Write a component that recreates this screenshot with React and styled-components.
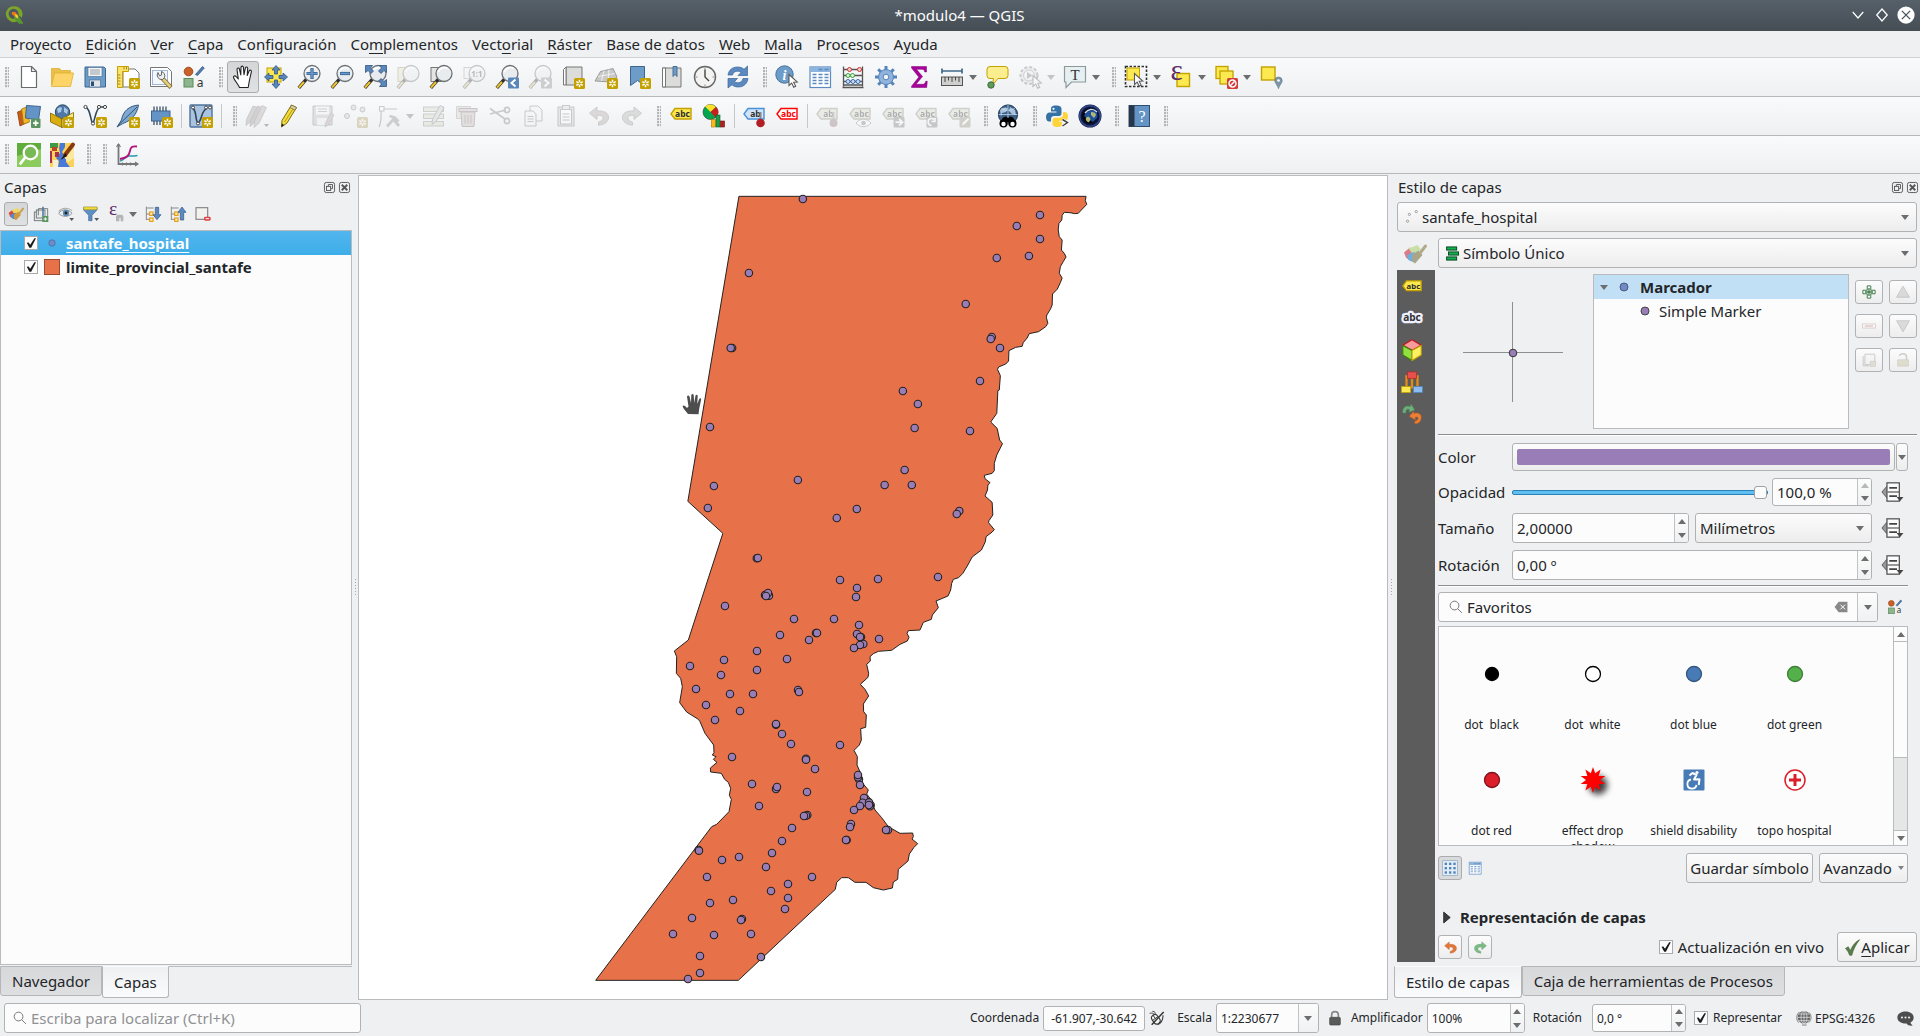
import React from "react";
import styled, { createGlobalStyle, css } from "styled-components";

const Global = createGlobalStyle`
  *, *::before, *::after { box-sizing: border-box; }
  html, body { margin: 0; padding: 0; }
  body, button, input, select {
    font-family: "Noto Sans", "Open Sans", sans-serif;
    font-size: 15px;
    color: #232629;
  }
  body { background: #eff0f1; overflow: hidden; }
  button, input, select { margin: 0; padding: 0; }
  svg { display: block; flex: none; overflow: visible; }
`;

/* ---------- drawings ---------- */

const NewBadge = () => (
  <g>
    <rect x="13" y="13" width="11" height="11" rx="1.5" fill="#c4a000" />
    <path d="M18.5 14.8v7.4M15.3 16.7l6.4 3.7M21.7 16.7l-6.4 3.7" stroke="#fff" strokeWidth="1.5" />
    <circle cx="18.5" cy="18.5" r="1.2" fill="#c4a000" />
  </g>
);

const Lens = ({ glass = "#e9ecee" }) => (
  <g>
    <path d="M9.500 14 1.800 22.800" stroke="#2e2e2e" strokeWidth="3.400" />
    <path d="M7 17 2 22.500" stroke="#f0c52e" strokeWidth="2" />
    <circle cx="15" cy="8.500" r="8" fill={glass} stroke="#6c7175" strokeWidth="1.300" />
    <path d="M9.500 7a6 6 0 0 1 9-3.500" stroke="#fff" strokeWidth="1.500" fill="none" />
  </g>
);

const Tag = ({ fill = "#fce94f", line = "#c4a000", text = "#2e2e2e", label = "abc", y = 0 }) => (
  <g transform={`translate(0 ${y})`}>
    <path d="M2 12 6 6.5h16v10.5H6z" fill={fill} stroke={line} strokeWidth="1.4" />
    <text x="13.5" y="15" fontSize="8.5" fontWeight="700" textAnchor="middle" fill={text} fontFamily="Noto Sans, sans-serif">{label}</text>
  </g>
);

const Pointer = ({ x = 0, y = 0 }) => (
  <path transform={`translate(${x} ${y})`} d="M0 0v11l2.7-2.4 2 4.2 2-1-2-4 3.6-.3z" fill="#fff" stroke="#5a5a5a" strokeWidth="1.1" />
);

const Swatches = () => (
  <g>
    <circle cx="6.500" cy="6.500" r="4.300" fill="#c8602a" stroke="#a34a1c" />
    <path d="M13.500 9.500 20.500 1.500l1.800 1.500L15.500 10.500z" fill="#4f7fb5" stroke="#36597f" strokeWidth=".8" />
    <rect x="2" y="13.500" width="9" height="8.500" fill="#8db58d" stroke="#5b8a5b" />
    <text x="18" y="21.500" fontSize="12" textAnchor="middle" fill="#333" fontFamily="Noto Sans, sans-serif">a</text>
  </g>
);

const Globe = () => (
  <g>
    <circle cx="12" cy="10.500" r="9.600" fill="#3d6187" stroke="#20364f" />
    <path d="M4 6c3-3 6-3 8-2l-2 4-4 1-1 4zM14 3l5 3 1 5-4-1-3-3zM8 13l5 1-1 5-4-2z" fill="#a8c4df" />
    <path d="M2.500 10.500h19M12 1v19M5 4c4 3 10 3 14 0" stroke="#cfdfee" strokeWidth=".7" fill="none" />
  </g>
);

const Epsilon = ({ y }) => (
  <text x="7.500" y={y} fontSize="29" textAnchor="middle" fill="#5c2d66" fontFamily="Liberation Serif, serif">ε</text>
);

const PaintBrush = ({ top, left, low, head, handle }) => (
  <g>
    <path d="M1 10.500 7 5.500l7 8.500-6 5.500-5-4z" fill={left} />
    <path d="M5.500 6.500 14.500 3l3.500 4.500-8 5z" fill={top} />
    <path d="m4 13 7-3 4 4-5 6-5-2.500z" fill={low} />
    <path d="m9.500 12.500 6-4 4 4.500-7.500 8.500c-2-1-4-5-2.500-9z" fill={head} />
    <path d="M17.500 10.500 22.500 4" stroke={handle} strokeWidth="3" strokeLinecap="round" />
  </g>
);

const LayerTreeLines = () => (
  <g>
    <path d="M2 1v20M2 3h11M2 12h5M2 20h5" stroke="#888" strokeWidth="1.500" />
    <rect x="7" y="9" width="5" height="5" fill="#fff2b0" stroke="#e59400" strokeWidth="1.600" />
    <rect x="7" y="18" width="5" height="5" fill="#fff2b0" stroke="#e59400" strokeWidth="1.600" />
  </g>
);

const undoPath = "M10 3 2.500 9.200 10 15.400v-4c4.500-.6 6.500.8 6 3.200-.4 1.700-2 2.800-4.500 3.600v3c6-.6 10-3.600 10-7.700 0-4.800-4.500-6.900-11.500-6.500z";

const ICONS = {
  logo: (
    <g>
      <path d="M11.500 1.500a9.500 9.500 0 1 0 5 17.700L14 16a6 6 0 1 1 3.300-4l4 3.200A9.700 9.700 0 0 0 11.500 1.500z" fill="#7da526" />
      <path d="m12 12 5.500.8L23 21.500v1h-5l-6-6.500z" fill="#589632" />
      <path d="M9.500 8.500h4l2.500 3v4l-2.500-1.300-4-3.200z" fill="#ee7913" />
      <path d="m13 11 3.500 1.200.5 4-3-1.800z" fill="#f6d23c" />
    </g>
  ),
  file: <path d="M4.500 1.500h10l5 5v16h-15zM14.500 1.500v5h5" fill="#fff" stroke="#6b6b6b" strokeWidth="1.200" strokeLinejoin="round" />,
  open: (
    <g stroke="#e0b030" strokeWidth=".8">
      <path d="M1.500 3.500h8l2 2h9v14h-19z" fill="#eac04a" />
      <path d="M4.500 8h19l-3 13.500H1.500z" fill="#fcd468" />
    </g>
  ),
  save: (
    <g>
      <path d="M2 2h19l1.500 1.500V22H2z" fill="#6d9cc9" stroke="#3c668f" />
      <rect x="5" y="2.500" width="14" height="9" fill="#f4f6f8" stroke="#3c668f" strokeWidth=".6" />
      <path d="M7 5h10M7 7h10M7 9h10" stroke="#8a9299" strokeWidth=".9" />
      <rect x="6.500" y="15" width="11" height="7" fill="#dfe4e8" stroke="#3c668f" strokeWidth=".6" />
      <rect x="8" y="16.500" width="3" height="4.500" fill="#2d4f73" />
    </g>
  ),
  layout: (
    <g>
      <path d="M7 4h12l4 4v14H7z" fill="#fff" stroke="#777" />
      <path d="M1.500 1.500h11v5h-6v16h-5z" fill="#fbe26b" stroke="#c4a000" />
      <path d="M2 10h2.500M2 13h2.500M2 16h2.500M2 19h2.500M8 2v2.500M10.500 2v2.500" stroke="#8f7500" strokeWidth=".8" />
      <NewBadge />
    </g>
  ),
  layouts: (
    <g>
      <path d="M1.500 2.500h17l4 4v15h-21z" fill="#fff" stroke="#777" />
      <rect x="3.500" y="5.500" width="15" height="14" fill="#f4f7fc" stroke="#9db8dc" />
      <path d="m13.500 13.500 8.500 9" stroke="#7a6a3a" strokeWidth="4.200" />
      <path d="m14 14 7.500 8" stroke="#e6cf7a" strokeWidth="2.600" />
      <path d="M9 7.500a4.500 4.500 0 0 0 4.500 7l2-2a4.500 4.500 0 0 0-3-6v3.500l-2 .8z" fill="#eceff1" stroke="#555" strokeWidth=".9" />
    </g>
  ),
  style: <Swatches />,
  hand: (
    <path d="M8.500 22.500C7 19 3.500 15.500 2.500 12.500c-.3-1.600 1.700-2.300 2.700-.9L7.300 14 6 4.500c-.1-1.700 2-2.100 2.400-.5L9.800 10 10 2.300c.1-1.600 2.200-1.600 2.400 0l.6 7.400 1.400-6.800c.5-1.500 2.400-1.100 2.300.5L16.200 10.500l2-4.800c.8-1.200 2.500-.5 2.200 1l-2 8.800-1.200 7z" fill="#fff" stroke="#222" strokeWidth="1.100" strokeLinejoin="round" />
  ),
  panSel: (
    <g>
      <rect x="3" y="3" width="14" height="14" fill="#fce94f" stroke="#c4a000" />
      <path d="m12 .5 4 4.500h-2.500v4h-3V5H8zM12 23.500l4-4.500h-2.500v-4h-3v4H8zM.5 12l4.500-4v2.500h4v3H5V16zM23.500 12 19 8v2.500h-4v3h4V16z" fill="#5a86ba" stroke="#2f5584" strokeWidth=".8" />
    </g>
  ),
  zoomIn: <g><Lens /><path d="M15 3v11M9.500 8.500h11" stroke="#36618f" strokeWidth="3.200" /><path d="M15 3.500v10M10 8.500h10" stroke="#6c99cb" strokeWidth="1.600" /></g>,
  zoomOut: <g><Lens /><path d="M10 8.500h10" stroke="#36618f" strokeWidth="3.200" /><path d="M10.500 8.500h9" stroke="#6c99cb" strokeWidth="1.600" /></g>,
  zoomFull: (
    <g>
      <Lens />
      <path d="M2.500.5h7l-2 2.500 3 3-2.500 2.500-3-3-2.500 2zM23.500.5h-7l2 2.500-3 3 2.500 2.500 3-3 2.500 2zM23.500 21.500h-7l2-2.500-3-3 2.500-2.500 3 3 2.500-2z" fill="#5a86ba" stroke="#2f5584" strokeWidth=".8" />
    </g>
  ),
  zoomSel: <g><rect x="2" y="2.500" width="12" height="14" fill="#f1e58c" stroke="#a99945" /><Lens /></g>,
  zoomLayer: <g><rect x="2" y="2.500" width="12" height="14" fill="#e4e4e2" stroke="#777" /><Lens /></g>,
  zoomNative: <g><rect x="2" y="2.500" width="12" height="11" fill="#f4f4f4" stroke="#999" /><Lens /><text x="15" y="11.500" fontSize="8" fontWeight="700" textAnchor="middle" fill="#444" fontFamily="Noto Sans, sans-serif">1:1</text></g>,
  zoomLast: <g><Lens /><rect x="13" y="12.500" width="11" height="11" rx="1" fill="#5a86ba" /><path d="m20.500 14.500-4 3.500 4 3.500" stroke="#fff" strokeWidth="2" fill="none" /></g>,
  zoomNext: <g><Lens /><rect x="13" y="12.500" width="11" height="11" rx="1" fill="#888" /><path d="m16.500 14.500 4 3.500-4 3.500" stroke="#fff" strokeWidth="2" fill="none" /></g>,
  newMap: <g><path d="M5 2h16v18H5z" fill="#dcdcda" stroke="#777" /><path d="M2.500 4.500 5 2v18H2.500z" fill="#fff" stroke="#777" /><NewBadge /></g>,
  new3d: <g><path d="M1 16 6.500 6.500 19 3.500l4 8.500-6 5z" fill="#c9c9c7" stroke="#8a8a88" strokeWidth=".8" /><path d="m4 11.500 17-3M10 5.500 7.500 16M15 4.500 14 16.500" stroke="#f4f4f4" fill="none" strokeWidth=".9" /><NewBadge /></g>,
  bookmarkNew: <g><path d="M3.500 1.500h14v19l-7-5-7 5z" fill="#6d9cc9" stroke="#3c668f" /><NewBadge /></g>,
  bookmarks: <g><path d="M4 3h17v19H2.500V3z" fill="#dcdcda" stroke="#777" /><path d="M2.500 3h3v19h-3z" fill="#fff" stroke="#777" /><path d="M13 1.500h4v10l-2-2.200-2 2.200z" fill="#6d9cc9" stroke="#3c668f" strokeWidth=".9" /></g>,
  clock: <g><circle cx="12" cy="12" r="10.500" fill="#f3f3f1" stroke="#666" strokeWidth="1.400" /><path d="M12 4.500V12l4 4" stroke="#444" strokeWidth="1.400" fill="none" /><path d="M12 2.500v2M12 19.500v2M2.500 12h2M19.500 12h2" stroke="#888" /></g>,
  refresh: <path d="M2 10c.6-5 4.500-8 9.500-8 3 0 5 .8 6.500 2.300L21.500 1v9.500H12l3-3c-1-.9-2-1.300-3.500-1.300C9 6.200 7 7.500 6.500 10zM22 13.500c-.6 5-4.500 8.500-9.500 8.500-3 0-5-.8-6.500-2.300L2 23v-9.500h9.500l-3 3c1 .9 2 1.300 3.500 1.300 2.500 0 4.500-1.800 5-4.300z" fill="#5a8ac0" stroke="#3a6598" strokeWidth=".7" />,
  identify: <g><circle cx="9.500" cy="9.500" r="8.700" fill="#6d9cc9" stroke="#47729f" /><text x="9.500" y="14.500" fontSize="14" fontStyle="italic" fontWeight="700" textAnchor="middle" fill="#fff" fontFamily="Liberation Serif, serif">i</text><Pointer x={14} y={9.500} /></g>,
  table: <g><rect x="2" y="2" width="20.500" height="20.500" fill="#fff" stroke="#5a8ac0" strokeWidth="1.200" /><rect x="2" y="2" width="20.500" height="5" fill="#8db4dc" /><path d="M4.500 9.500h4M4.500 12.500h4M4.500 15.500h4M4.500 18.500h4M10.500 9.500h4M10.500 12.500h4M10.500 15.500h4M10.500 18.500h4M16.500 9.500h4M16.500 12.500h4M16.500 15.500h4M16.500 18.500h4M10.500 4.500h4M16.500 4.500h4" stroke="#5a8ac0" strokeWidth="1.300" /></g>,
  abacus: (
    <g fill="none">
      <path d="M2.500 1.500v20M21.500 1.500v20M1.500 22.500h21M2.500 4.500h19M2.500 10.500h19M2.500 16.500h19M2 20h20" stroke="#555" strokeWidth="1.300" />
      <g stroke="#c33" fill="#fcc"><circle cx="8.500" cy="4.500" r="2" /><circle cx="18.500" cy="4.500" r="2" /></g>
      <g stroke="#4a9a4a" fill="#cfc"><circle cx="7" cy="10.500" r="2" /><circle cx="11.500" cy="10.500" r="2" /></g>
      <g stroke="#3a6ea8" fill="#cdf"><circle cx="7" cy="16.500" r="2" /><circle cx="12" cy="16.500" r="2" /><circle cx="17" cy="16.500" r="2" /></g>
    </g>
  ),
  gear: (
    <g>
      <g stroke="#5584bb" strokeWidth="3">
        <path d="M12 1v22M1 12h22M4.200 4.200l15.600 15.600M19.800 4.200 4.200 19.800" />
      </g>
      <circle cx="12" cy="12" r="7.500" fill="#8fb3dc" stroke="#5584bb" />
      <circle cx="12" cy="12" r="2.800" fill="#f3f4f5" stroke="#5584bb" />
    </g>
  ),
  sigma: <path d="M4.500 1.500h15V7h-1.700c-.4-2-1.200-2.700-3-2.700H9.500l6 7.200-6.500 7.800h6.500c2 0 2.800-.9 3.200-3h1.600l-.6 6.200H4.500v-1.200l7.300-9.200-7.300-9.200z" fill="#a8009c" stroke="#7c0074" strokeWidth=".5" />,
  measure: <g><path d="M1.500 6h21M2 3.500v5M22 3.500v5" stroke="#3f6a8a" strokeWidth="1.700" /><rect x="1.500" y="12" width="21" height="8.500" fill="#cfcfcd" stroke="#555" /><path d="M5 12v5M8.500 12v3.500M12 12v5M15.500 12v3.500M19 12v5" stroke="#444" /></g>,
  tip: <g><path d="M5 1.500h15a3 3 0 0 1 3 3v6a3 3 0 0 1-3 3h-7L7.500 20l1-6.500H5a3 3 0 0 1-3-3v-6a3 3 0 0 1 3-3z" fill="#fbee8f" stroke="#c4a000" /><circle cx="6" cy="20" r="3.200" fill="#5f9a5a" stroke="#3c6e38" /></g>,
  actions: <g><circle cx="11" cy="10.500" r="8.500" fill="#ddd" stroke="#777" strokeWidth="2" strokeDasharray="3 2" /><circle cx="11" cy="10.500" r="5.500" fill="#eee" stroke="#888" /><path d="m9 7 5.500 3.500L9 14z" fill="#777" /><Pointer x={15} y={10.500} /></g>,
  textNote: <g><path d="M1.500 1.500h21V17H8.500L3 22.500V17H1.500z" fill="#e6f0f2" stroke="#8d999c" strokeWidth="1.200" /><text x="12" y="14.500" fontSize="15" textAnchor="middle" fill="#333" fontFamily="Liberation Serif, serif">T</text></g>,
  select: <g><rect x="1.500" y="1.500" width="21" height="20" fill="none" stroke="#333" strokeWidth="1.600" strokeDasharray="2.500 1.500" /><rect x="3" y="3" width="12.500" height="12" fill="#fce94f" stroke="#c4a000" /><Pointer x={10.500} y={8.500} /></g>,
  selectExpr: <g><rect x="8" y="8.500" width="12.500" height="13" fill="#fce94f" stroke="#c4a000" strokeWidth="1.400" /><Epsilon y={15} /></g>,
  deselect: <g><rect x="2" y="1.500" width="12" height="12" fill="#fce94f" stroke="#c4a000" strokeWidth="1.300" /><rect x="6" y="6" width="13" height="13" fill="#fce94f" stroke="#c4a000" strokeWidth="1.300" /><rect x="13" y="13" width="11" height="11" rx="1.500" fill="#d33b3b" /><circle cx="18.500" cy="18.500" r="3.500" fill="none" stroke="#fff" strokeWidth="1.500" /><path d="m16 21 5-5" stroke="#fff" strokeWidth="1.500" /></g>,
  selectLoc: <g><rect x="2.500" y="2" width="13.500" height="13" fill="#fce94f" stroke="#c4a000" strokeWidth="1.400" /><path d="M19.500 12a3.700 3.700 0 0 1 3.700 3.700c0 2.600-2.700 4-3.700 8-1-4-3.700-5.400-3.700-8a3.700 3.700 0 0 1 3.700-3.700z" fill="#7d97a8" stroke="#5b7688" strokeWidth=".6" /><circle cx="19.500" cy="15.500" r="1.300" fill="#fff" /></g>,

  sources: (
    <g>
      <path d="M.5 8 6 6l5 12-8 4z" fill="#c85a1a" stroke="#8e3d0e" strokeWidth=".8" />
      <path d="m4.500 5 5-2 3 15-6 2z" fill="#f2b82a" stroke="#a07700" strokeWidth=".8" />
      <path d="m9.500 1.500 14 1-2 13.500-13-2z" fill="#6493c6" stroke="#3c668f" />
      <rect x="14" y="14.500" width="9.500" height="9.500" rx="1" fill="#5b9460" /><path d="M18.700 16.500v5.500M16 19.200h5.500" stroke="#fff" strokeWidth="1.700" />
    </g>
  ),
  geopackage: (
    <g>
      <circle cx="12.500" cy="8" r="7.200" fill="#4f78a6" stroke="#2d4966" /><path d="M7 5c2-2 4-2 5-1l-1 4-3 1zM14 3l4 3-1 4-3-2z" fill="#a8c8e8" />
      <path d="m.5 9 11.500 6v8.500L.5 18z" fill="#d9ad10" stroke="#7d6200" strokeWidth=".8" /><path d="m12 15 11.500-6.500V18L12 23.500z" fill="#fbf07a" stroke="#7d6200" strokeWidth=".8" />
      <NewBadge />
    </g>
  ),
  shapefile: <g><path d="M2.500 3C8 5 7 17 10 19.500 12 16 13 3 17.500 3H22" fill="none" stroke="#2f4757" strokeWidth="1.600" /><g fill="#fff" stroke="#444"><circle cx="2.500" cy="3" r="1.600" /><circle cx="10" cy="19.500" r="1.600" /><circle cx="16" cy="3" r="1.600" /><circle cx="22" cy="3" r="1.600" /></g><NewBadge /></g>,
  spatialite: <g><path d="M22.500 1C13 2 7 7 5.500 16L1 23c3-2 5-3 7-4 8-3 13-9 14.500-18z" fill="#7fa9d2" stroke="#355a80" /><path d="M2 21.500 21 3" stroke="#2d4966" strokeWidth=".9" /><NewBadge /></g>,
  memory: <g><rect x="2.500" y="7" width="18.500" height="10" fill="#6493c6" stroke="#3c668f" /><path d="M5 7V2.500M8 7V2.500M11 7V2.500M14 7V2.500M17 7V2.500M5 17v4M8 17v4M11 17v4" stroke="#3c5064" strokeWidth="1.300" /><NewBadge /></g>,
  virtual: <g><rect x="1" y="1" width="22" height="22" rx="1" fill="#a9c3e0" stroke="#4f739a" strokeWidth="1.400" /><path d="M4 4.500C8 7 6 17 9 19c4-2 3-13 9-14.500" fill="none" stroke="#2f4757" strokeWidth="1.600" /><g fill="#fff" stroke="#444"><circle cx="4" cy="3.500" r="1.500" /><circle cx="9" cy="19.500" r="1.500" /><circle cx="17" cy="3.500" r="1.500" /><circle cx="21" cy="3.500" r="1.500" /></g><NewBadge /></g>,
  pencils: <g stroke="#7a6a68" strokeWidth=".8"><path d="m8 2 4.500 1.500L6 17l-5 4.500.5-6z" fill="#a99a98" /><path d="m12.500 2 4.500 1.500L10 18l-5 4.500.5-6z" fill="#9a8c8a" /><path d="m17 1.500 4.500 2L14 19l-5 4.500.5-6z" fill="#b5a4a0" /><path d="M19 20h5l-2.500 3z" fill="#444" stroke="none" /></g>,
  pencil: <g><path d="m13.500 1 5 2.500L9 19l-5.500 4 .5-6.500z" fill="#f4dc3e" stroke="#7b6a10" /><path d="m13.500 1 5 2.500-1.500 2.700-5-2.700z" fill="#d8d0a0" stroke="#7b6a40" strokeWidth=".8" /><path d="m3.500 23 .3-3.500 2.400 1.600z" fill="#222" /><path d="M15 5 6.500 18" stroke="#b59a10" /></g>,
  saveEdits: <g><path d="M2 2h19v19H2z" fill="#bbb" stroke="#777" /><rect x="5" y="2.500" width="13" height="8" fill="#f4f4f4" /><path d="M7 5h9M7 7.500h9" stroke="#888" /><rect x="6" y="14" width="10" height="7" fill="#eee" /><path d="m20 9 3 2-6 10-3 2 .5-4z" fill="#c99" stroke="#777" strokeWidth=".8" /></g>,
  addPoint: <g><g fill="#ccc" stroke="#777"><circle cx="9.500" cy="3.500" r="2.500" /><circle cx="18.500" cy="5.500" r="2.500" /><circle cx="3" cy="12" r="2.500" /></g><NewBadge /></g>,
  vertex: <g><path d="M4 5h16M4 5c0 7 1 12-2 18" stroke="#777" strokeWidth="1.200" fill="none" /><rect x="2.500" y="2.500" width="4.500" height="4.500" fill="#fff" stroke="#777" /><path d="m10 22.500 8-9M12.500 12l5 1.500 4 4M16 15l6 7" stroke="#888" strokeWidth="2.800" fill="none" /></g>,
  multiEdit: <g><rect x="1.500" y="3" width="20" height="4.500" fill="#ddd8a8" stroke="#888" /><rect x="1.500" y="10" width="20" height="4.500" fill="#ddd8a8" stroke="#888" /><rect x="1.500" y="17.500" width="20" height="4.500" fill="#ddd8a8" stroke="#888" /><path d="m18 1.500 4 2-8 14-4 3 .5-5z" fill="#ccc" stroke="#777" /></g>,
  trash: <g fill="#d8b4b0" stroke="#8a6a68"><path d="M1.500 2.500h14v12h-14z" fill="#d8d5b4" stroke="#999" /><path d="M6 8h14l-1 14.500H7z" /><rect x="4" y="4.500" width="18" height="3" /><path d="M10 11v8.500M13 11v8.500M16 11v8.500" fill="none" /></g>,
  cut: <g fill="none" stroke="#777" strokeWidth="1.600"><path d="M2 4.500 17 15M2 10l16-4" /><circle cx="19" cy="6" r="2.600" /><circle cx="19" cy="17" r="2.600" /></g>,
  copy: <g fill="#f4f4f4" stroke="#777"><path d="M9 2h8l4 4v11H9z" /><path d="M4 7h8l3 3v12H4z" /><path d="M6.500 12.500h6M6.500 15h6M6.500 17.500h6" /></g>,
  paste: <g stroke="#777"><rect x="4" y="3" width="16" height="19" fill="#ccc" /><rect x="6.500" y="5.500" width="11" height="14.500" fill="#fff" /><rect x="8.500" y="1.500" width="7" height="4" fill="#ddd" /><path d="M8.500 10h7M8.500 13h7M8.500 16h7" /></g>,
  undo: <path d={undoPath} fill="#e0783a" stroke="#b95a22" strokeWidth=".6" />,
  redo: <path transform="translate(24 0) scale(-1 1)" d={undoPath} fill="#7dbb86" stroke="#55925e" strokeWidth=".6" />,
  undoGray: <path d={undoPath} fill="#b8a098" stroke="#8a7a72" />,
  redoGray: <path transform="translate(24 0) scale(-1 1)" d={undoPath} fill="#a8b0a8" stroke="#7a827a" />,
  label: <Tag y={-2} />,
  diagram: <g><circle cx="8.500" cy="8" r="7.500" fill="#00a650" stroke="#333" strokeWidth=".6" /><path d="M8.500 8 3 2.500A8 8 0 0 1 14 3z" fill="#fce02a" /><path d="M8.500 8 14 3a7.700 7.700 0 0 1 0 11z" fill="#c81e1e" /><rect x="9.500" y="15.500" width="4" height="7.500" fill="#fcb814" stroke="#a67600" strokeWidth=".6" /><rect x="14" y="11" width="4" height="12" fill="#1e9a4a" stroke="#0b5a28" strokeWidth=".6" /><rect x="18.500" y="17" width="4" height="6" fill="#b41e1e" stroke="#6a0f0f" strokeWidth=".6" /></g>,
  pinLabel: <g><Tag fill="#cfe3fb" line="#4a90d9" label="ab" y={-2} /><path d="M18.500 8v8" stroke="#888" strokeWidth="2" /><circle cx="18.500" cy="19" r="4.300" fill="#b11f24" /></g>,
  unplaced: <Tag fill="#fff" line="#f00" text="#f00" y={-2} />,
  lab1: <g><Tag fill="#ddd8b0" line="#8f8a60" label="ab" y={-2} /><path d="M18.500 8v8" stroke="#888" strokeWidth="2" /><circle cx="18.500" cy="19" r="4" fill="#a66" /></g>,
  lab2: <g><Tag fill="#ddd8b0" line="#8f8a60" y={-2} /><path d="M8 19c4-5 11-5 15 0-4 5-11 5-15 0z" fill="#fff" stroke="#777" /><circle cx="15.500" cy="19" r="2.300" fill="#777" /></g>,
  lab3: <g><Tag fill="#ddd8b0" line="#8f8a60" y={-2} /><rect x="12.500" y="13" width="11" height="10.500" fill="#777" rx="1" /><path d="M14.500 18.200h6M18 15l3.500 3.200L18 21.500" stroke="#fff" strokeWidth="1.800" fill="none" /></g>,
  lab4: <g><Tag fill="#ddd8b0" line="#8f8a60" y={-2} /><rect x="12.500" y="13" width="11" height="10.500" fill="#777" rx="1" /><path d="M21 17a3.500 3.500 0 1 0-3.500 4.500M21 14v3.500h-3.500" stroke="#fff" strokeWidth="1.500" fill="none" /></g>,
  lab5: <g><Tag fill="#ddd8b0" line="#8f8a60" y={-2} /><rect x="12.500" y="13" width="11" height="10.500" fill="#998f60" rx="1" /><path d="m15 21.500 1-3 5-4.500 1.200 1.500-5 5z" fill="#fff" /></g>,
  search: <g><Globe /><g fill="#000"><path d="m7 13.500 3-1 2 1.500 2-1.500 3 1 3 5H4z" /><circle cx="7.500" cy="19.500" r="4" /><circle cx="16.500" cy="19.500" r="4" /></g><circle cx="7.500" cy="20" r="2.200" fill="#fff" /><circle cx="16.500" cy="20" r="2.200" fill="#fff" /></g>,
  python: (
    <g>
      <path d="M11 1.500c-4.500 0-5 1.800-5 3.500v2.500h5.500v1H4.500C2.500 8.500 1 10 1 13c0 3.200 1.500 4.500 3 4.500h2V15c0-2 1.500-3 3-3h5c1.500 0 2.500-1 2.500-2.500V5c0-2-1.500-3.500-5.500-3.500z" fill="#3572a5" />
      <path d="M13 23c-4.500 0-5.500-1.500-5.500-3.200v-3.300c0-1.500 1-2.700 2.500-2.700h5c1.600 0 3-1.300 3-2.800V8h1.700c2 0 3.300 1.500 3.300 4.500 0 2-.8 3.500-1.800 4.200h-7v1h3v2.100C17.200 21.500 16 23 13 23z" fill="#ffd43b" />
      <circle cx="8.500" cy="4.800" r="1.100" fill="#fff" />
      <path d="m17.500 15.500 5 3-5 3.500" stroke="#fff" strokeWidth="3.200" fill="none" />
      <path d="m17.500 15.500 5 3-5 3.500" stroke="#444" strokeWidth="1.500" fill="none" />
    </g>
  ),
  earth: <g><circle cx="12" cy="12" r="11.500" fill="#0d1638" /><circle cx="12" cy="12" r="10.300" fill="none" stroke="#31478f" strokeWidth="1.600" /><circle cx="11.500" cy="12" r="7.500" fill="#05070f" /><path d="M6 12c2-5 7-7 11-5 2 1 3 4 2 7l-4 4-5-3z" fill="#1f4f9a" /><path d="M8 14c2-2 3-1 4 0s0 3-1 4-4-2-3-4zM13 8c3 0 5 1 5 3l-2 3-3-3z" fill="#b0b878" /><path d="M7 9c3-4 8-5 12-1" stroke="#c8dcf4" strokeWidth="1.300" fill="none" /></g>,
  help: <g><rect x="2" y="1.500" width="20.500" height="21" fill="#6493c6" stroke="#2f4d6c" /><rect x="2" y="1.500" width="5.500" height="21" fill="#27374a" /><text x="15" y="17.500" fontSize="16" textAnchor="middle" fill="#fff" fontFamily="Liberation Serif, serif">?</text></g>,
  plugin1: <g><rect width="24" height="24" fill="#5fae3c" /><path d="M0 13 24 6v18H0z" fill="#8ccb5e" /><path d="m8.500 14-5 6.500" stroke="#fff" strokeWidth="2.800" strokeLinecap="round" /><circle cx="13.500" cy="9.500" r="6.800" fill="#79b958" stroke="#fff" strokeWidth="2.200" /></g>,
  plugin2: (
    <g>
      <rect width="24" height="24" fill="#fbd25a" />
      <path d="M0 0h8v5H0z" fill="#3f9a48" /><path d="M2 4h5v4H2z" fill="#b8452e" />
      <path d="M10 0h5v4l-3 5 4 6v4l4 5H8l1-6-3-3 4-5-1-5z" fill="#4779d8" />
      <path d="M0 8h2v12H0zM5 9h4v5H5z" fill="#a8304e" /><path d="M3 17h5v7H3z" fill="#f4f0d8" />
      <path d="M15 9 24 5v10l-6 4-4-5z" fill="#fbe9a0" />
      <path d="M23 1.500 15 12" stroke="#8a3a12" strokeWidth="4" strokeLinecap="round" />
      <path d="m15.500 10-5 7 6.500-4z" fill="#2a1408" />
    </g>
  ),
  plot: <g fill="none"><path d="M3.500 1v20h19" stroke="#777" strokeWidth="1.800" /><path d="m1.500 4 2-3 2 3M20 19l3 2-3 2M7.500 19.500v3M11.500 19.500v3M15.500 19.500v3" stroke="#777" strokeWidth="1.200" /><path d="M5 18c5-1 4-4.500 9-5 3 0 3.500.5 8.500-.5" stroke="#2b9ab0" strokeWidth="1.500" /><path d="M5 16c5-1 9-2 10-8 .6-4 2-5 7-4.500" stroke="#b0127b" strokeWidth="1.800" /></g>,

  brush: <PaintBrush top="#f0d860" left="#d9453f" low="#4d8fd0" head="#cf9a3c" handle="#caa04e" />,
  brushPale: <PaintBrush top="#c9dfa8" left="#dd7a86" low="#6cb0dc" head="#aba488" handle="#b0ab88" />,
  addGroup: <g fill="#e9ebeb" stroke="#6e7678" strokeWidth="1.400"><rect x="2" y="9" width="13" height="13" /><rect x="5" y="6" width="13" height="12" /><path d="M8 14V4h14v12" fill="none" /><path d="M15 1v16" stroke="#47729f" strokeWidth="2.200" /><rect x="14" y="15" width="9" height="9" fill="#5b9460" stroke="none" /><path d="M18.500 17v5M16 19.500h5" stroke="#fff" /></g>,
  eye: <g><path d="M1 11c5-7 15-7 20 0-5 6-15 6-20 0z" fill="#eef1f3" stroke="#8a8f92" strokeWidth="1.400" /><circle cx="12" cy="10.500" r="4.800" fill="#5f8db8" /><circle cx="12" cy="10.500" r="2.200" fill="#222" /><path d="M1 8c5-6 15-6 20-1" fill="none" stroke="#aaa" strokeWidth="1.600" /><path d="M17 18h7l-3.500 4.500z" fill="#555" /></g>,
  filter: <g><path d="M1 2h20v4l-7.500 8v8h-5v-8L1 6z" fill="#5b8fc6" stroke="#3c668f" /><path d="M1 1.500h20v4H1z" fill="#f4dc3e" stroke="#a8920c" strokeWidth=".8" /><path d="M17 18h7l-3.500 4.500z" fill="#555" /></g>,
  expr: <g><Epsilon y={14} /><path d="M12 23v-8l2-2h7l2 2v8h-4v-5h-2v5z" fill="#b5b5b5" /></g>,
  expand: <g><LayerTreeLines /><path d="M15.500 2h5v11h3.500L18 20.500 12 13h3.500z" fill="#5a8ac0" stroke="#2f5584" /></g>,
  collapse: <g><LayerTreeLines /><path d="M15.500 21h5V9.500H24L18 1.500 12 9.500h3.500z" fill="#5a8ac0" stroke="#2f5584" /></g>,
  remove: <g><rect x="1.500" y="2.500" width="17.500" height="17.500" fill="#f2f2f1" stroke="#888" strokeWidth="1.800" /><rect x="13.500" y="16" width="10" height="6" rx="2" fill="#e04545" /><path d="M16 19h5" stroke="#fff" strokeWidth="1.500" /></g>,

  tabLabel: <Tag />,
  tabMask: <g><text x="12" y="15.500" fontSize="11" fontWeight="700" textAnchor="middle" fill="#333" stroke="#eef0ff" strokeWidth="5" strokeLinejoin="round" paintOrder="stroke" fontFamily="Noto Sans, sans-serif">abc</text></g>,
  cube: <g strokeLinejoin="round" strokeWidth="1.200"><path d="m12 .8 10 6-10 5.500L2 6.800z" fill="#f79a9a" stroke="#c4141a" /><path d="m2 7 10 5.500V23.500L2 17.500z" fill="#8fe040" stroke="#3f7d0c" /><path d="M22 7 12 12.500V23.500l10-6z" fill="#fdf063" stroke="#c4a000" /></g>,
  tree: <g><path d="M6 17V6h12v11M12 6v13" stroke="#e08a18" strokeWidth="2.600" fill="none" /><rect x="7" y="1" width="10" height="7" fill="#e85050" stroke="#b02a2a" strokeWidth=".8" /><rect x=".5" y="17" width="10" height="6.500" fill="#fce94f" stroke="#c4a000" strokeWidth=".8" /><rect x="13.500" y="17" width="10" height="6.500" fill="#8dbdf0" stroke="#4f83bd" strokeWidth=".8" /></g>,
  history: <g><path d="M2 11C1 5 6 2 10 4l1-3 4 6.500-6 2.500V7C6 6 5 8 5.500 11z" fill="#6fb07a" stroke="#4a8455" strokeWidth=".6" /><path d="M22 16c1-4-4-6-8-4.500V9l-5 5.500 6.500 4v-3c3-.6 3.500.3 3 2-.5 1.500-2 2-3.500 2v3C19 23 22 20 22 16z" fill="#ea7f35" stroke="#b95a22" strokeWidth=".6" /></g>,
  points: <g fill="none" stroke="#888" strokeWidth="1.200"><circle cx="18" cy="2.500" r="1.800" /><circle cx="7" cy="7" r="1.800" /><circle cx="4" cy="18" r="1.800" /></g>,
  single: <g fill="#10b050" stroke="#0a4a24" strokeWidth="1.600"><rect x="1" y="1.500" width="16" height="5" /><rect x="4" y="9.500" width="16" height="5" /><rect x="1" y="17.500" width="16" height="5" /></g>,
  plus: <g><path d="M9 1.500h6V9h7.500v6H15v7.500H9V15H1.500V9H9z" fill="#fff" stroke="#3f7a48" strokeWidth="1.700" /><path d="M12 5v14M5 12h14" stroke="#3f7a48" strokeWidth="2.200" /></g>,
  minus: <g><rect x="1" y="8.500" width="22" height="7" fill="#fff" stroke="#b99" strokeWidth="1.500" /><path d="M5 12h14" stroke="#b77" strokeWidth="2" /></g>,
  up: <path d="M12 2 23 21H1z" fill="#bbb" stroke="#888" strokeWidth="1.500" />,
  down: <path d="M12 22 1 3h22z" fill="#bbb" stroke="#888" strokeWidth="1.500" />,
  dup: <g><path d="M2 5v17h10" fill="none" stroke="#888" strokeWidth="1.500" /><path d="M5 2h17v18H5z" fill="#f4f4f4" stroke="#888" strokeWidth="1.500" /><rect x="14" y="14" width="9" height="9" fill="#c9c6ae" stroke="#999" /></g>,
  unlock: <g><path d="M6 5c0-5 12-5 12 1v6" fill="none" stroke="#999" strokeWidth="2.500" /><rect x="2.500" y="11.500" width="19" height="11" rx="1" fill="#c9c2a0" stroke="#999" /></g>,
  lock: <g><path d="M7 11V7c0-6 10-6 10 0v4" fill="none" stroke="#888" strokeWidth="2.500" /><rect x="4" y="11" width="16" height="11.500" rx="1.500" fill="#5a5a5a" stroke="#444" /></g>,
  define: <g><path d="M1 12 7.500 4.500v15z" fill="#999" stroke="#555" /><rect x="6.500" y="2" width="13.500" height="20" fill="#fcfcfc" stroke="#555" strokeWidth="1.400" /><path d="M9 7.500h8.500M9 16.500h8.500" stroke="#444" strokeWidth="1.800" /><path d="M7 12h13" stroke="#555" strokeWidth="1.300" /><path d="M17 17.500h7.500L20.700 22z" fill="#444" /></g>,
  find: <g fill="none" stroke="#777" strokeWidth="1.700"><circle cx="9.500" cy="9.500" r="7.500" /><path d="m15 15 7 7" /></g>,
  clear: <g><path d="M1 12 8 3h15v18H8z" fill="#888" /><path d="m11 8 8 8M19 8l-8 8" stroke="#fff" strokeWidth="1.700" /></g>,
  grid: <g><rect x="1" y="1" width="22" height="22" fill="#e4ecf5" stroke="#8aa5c4" /><g fill="#4f83bd">{[4, 10.500, 17].map((y) => [4, 10.500, 17].map((x) => <rect key={`${x}-${y}`} x={x} y={y} width="3.500" height="3.500" />))}</g></g>,
  check: <path d="M2 13.500 6 11l3 5.500C12 9 16 4 22 1c-5 6-9 14-11 22H8C6.500 19 4.500 15.500 2 13.500z" fill="#5a7f4a" stroke="#35522a" strokeWidth=".8" />,
  mouse: (
    <g fill="none" stroke="#333">
      <g transform="rotate(-35 9 13)"><rect x="4.500" y="7" width="10" height="15" rx="5" fill="#f4f4f4" strokeWidth="1.600" /><path d="M4.500 13h10M9.500 7v6" strokeWidth="1.300" /></g>
      <path d="M5 2c4 0 5 2 4 5M1 5c4-1 6 0 7 2" strokeWidth="1.300" />
      <path d="M22 3 4 22" strokeWidth="2.200" /><path d="M21 8c0 8-3 12-8 14" strokeWidth="1.600" />
    </g>
  ),
  crs: <g><path d="M5 3C0 7 0 15 4 19M20 4c4 5 3 12-1 15M9 22.500h7" stroke="#666" strokeWidth="1.200" fill="none" /><circle cx="12" cy="11" r="9.500" fill="#666" /><g stroke="#eee" strokeWidth="1" fill="none"><ellipse cx="12" cy="11" rx="4.500" ry="9.500" /><path d="M12 1.500v19M2 11h20M4 6h16M4 16h16" /></g></g>,
  bubble: <g><path d="M12 2c6.600 0 11.500 3.600 11.500 8.500 0 3-1.500 5.500-4.500 7 .5 2 2 3.500 3.500 4.500-4 .8-7.500-.6-9-3H12C5.400 19 .5 15.400.5 10.500S5.400 2 12 2z" fill="#4d4d4d" /><g fill="#eee"><circle cx="7" cy="10.500" r="1.500" /><circle cx="12" cy="10.500" r="1.500" /><circle cx="17" cy="10.500" r="1.500" /></g></g>,
  float: <g fill="none" stroke="#555"><rect x="1" y="1" width="22" height="22" rx="4" strokeWidth="2" /><rect x="5.500" y="9.500" width="9" height="9" strokeWidth="2" /><path d="M9.500 9V5.500h9v9H15" strokeWidth="2" /></g>,
  close: <g fill="none" stroke="#555"><rect x="1" y="1" width="22" height="22" rx="4" strokeWidth="2" /><path d="m6 6 12 12M18 6 6 18" strokeWidth="4" /></g>,
  minWin: <path d="m5 8 7 8 7-8" fill="none" stroke="#fcfcfc" strokeWidth="1.700" />,
  maxWin: <path d="m12 4 7 8-7 8-7-8z" fill="none" stroke="#fcfcfc" strokeWidth="1.700" />,
  closeWin: <g><circle cx="12" cy="12" r="11.500" fill="#fcfcfc" /><path d="m6.500 6.500 11 11M17.500 6.500l-11 11" stroke="#475057" strokeWidth="1.700" /></g>,
  triRight: <path d="m5 2 12 10L5 22z" fill="#3a3d40" stroke="#1c1e20" strokeWidth="1.500" />,
};

const Icon = ({ name, size = 24 }) => (
  <svg width={size} height={size} viewBox="0 0 24 24" aria-hidden="true">{ICONS[name]}</svg>
);

const Arrow = ({ up, faded }) => (
  <svg width="8" height="5" viewBox="0 0 8 5" aria-hidden="true">
    <path d={up ? "M0 5 4 0l4 5z" : "M0 0h8L4 5z"} fill={faded ? "#b5b7b9" : "#6b6d6f"} />
  </svg>
);

/* ---------- window frame ---------- */

const Window = styled.div`
  height: 100vh;
  display: flex;
  flex-direction: column;
  line-height: 20px;
`;

const TitleBar = styled.header`
  flex: none;
  height: 31px;
  padding: 0 5px 2px 4px;
  display: grid;
  grid-template-columns: 1fr auto 1fr;
  align-items: center;
  color: #fcfcfc;
  background: linear-gradient(#566069, #454d54);
`;

const WindowTitle = styled.h1`
  margin: 0;
  font-size: 15px;
  font-weight: 400;
`;

const WindowButtons = styled.div`
  display: flex;
  justify-content: flex-end;
  gap: 6px;
`;

const PlainButton = styled.button`
  border: 0;
  background: none;
  display: flex;
  align-items: center;
  justify-content: center;
`;

const MenuBar = styled.nav`
  flex: none;
  height: 27px;
  padding: 0 2px;
  display: flex;
  border-bottom: 1px solid #d1d2d4;
`;

const MenuItem = styled.button`
  border: 0;
  padding: 0 7px;
  background: none;
  white-space: nowrap;
  &:first-child { padding-left: 8px; }
`;

const Mnemonic = styled.span`
  text-decoration: underline;
  text-underline-offset: 3px;
`;

const ToolBarRow = styled.div`
  flex: none;
  height: ${(p) => (p.$last ? 38 : 39)}px;
  display: flex;
  align-items: center;
  gap: 3px;
  background: linear-gradient(#f9fafc, #eff0f1);
  border-bottom: 1px solid #b6b8ba;
`;

const ToolBar = styled.div`
  display: flex;
  align-items: center;
`;

const Grip = styled.span`
  width: 4px;
  height: 21px;
  margin: 0 4px 0 5px;
  background: radial-gradient(circle at 1px 1px, #b3b5b7 40%, transparent 60%) 0 0 / 3px 3px;
`;

const Tool = styled.button`
  height: ${(p) => (p.$small ? 24 : 32)}px;
  width: ${(p) => (p.$small ? 24 : 32) + (p.$menu ? 12 : 0)}px;
  margin-right: 1px;
  padding: 0 ${(p) => (p.$menu ? 2 : 3)}px 0 3px;
  display: flex;
  align-items: center;
  justify-content: space-between;
  border: 1px solid transparent;
  border-radius: 3px;
  background: none;
  ${(p) => p.$on && css`
    border-color: #aaacae;
    background: linear-gradient(#d5d6d7, #e0e1e2);
  `}
  ${(p) => p.disabled && css`
    svg { opacity: 0.35; filter: grayscale(0.6); }
  `}
`;

const Separator = styled.span`
  width: 1px;
  height: 24px;
  margin: 0 3px;
  background: #c5c7c9;
`;

/* ---------- docks ---------- */

const Workspace = styled.main`
  flex: 1;
  min-height: 0;
  display: grid;
  grid-template-columns: 352px 6px minmax(0, 1fr) 6px 526px;
  grid-template-rows: minmax(0, 1fr);
`;

const Splitter = styled.div`
  display: flex;
  align-items: center;
  justify-content: center;
`;

const SplitDots = styled.span`
  width: 1px;
  height: 16px;
  background: repeating-linear-gradient(#a6a8aa 0 1px, transparent 1px 3px);
`;

const Dock = styled.section`
  min-width: 0;
  min-height: 0;
  display: flex;
  flex-direction: column;
  padding-bottom: 2px;
`;

const DockTitle = styled.div`
  flex: none;
  height: 28px;
  padding: 0 2px 2px 4px;
  display: flex;
  align-items: center;
  gap: 4px;
  h2 { flex: 1; margin: 0; font-size: 15px; font-weight: 400; }
`;

const LayerTools = styled.div`
  flex: none;
  height: 28px;
  padding: 0 4px 4px;
  display: flex;
  align-items: center;
`;

const LayerList = styled.ul`
  flex: 1;
  margin: 0 0 1px;
  padding: 0;
  list-style: none;
  background: #fcfcfc;
  border: 1px solid #b9bbbd;
`;

const LayerRow = styled.li`
  height: 24px;
  padding-left: 23px;
  display: flex;
  align-items: center;
  ${(p) => p.$selected && css`
    color: #fcfcfc;
    background: linear-gradient(#52b5ee, #3daee9);
  `}
`;

const LayerLabel = styled.label`
  font-weight: 700;
  text-decoration: ${(p) => (p.$active ? "underline" : "none")};
  text-underline-offset: 3px;
`;

const LayerSymbol = styled.span`
  width: 16px;
  height: 16px;
  margin: 0 6px;
  display: grid;
  place-items: center;
`;

const CheckBox = styled.input.attrs({ type: "checkbox" })`
  appearance: none;
  flex: none;
  width: 14px;
  height: 14px;
  display: grid;
  place-items: center;
  background: #fcfcfc;
  border: 1px solid #a8aaac;
  &:checked::before {
    content: "";
    width: 10px;
    height: 10px;
    background: #1a1c1e;
    clip-path: polygon(8% 48%, 26% 44%, 42% 68%, 84% 2%, 100% 2%, 52% 98%, 34% 98%);
  }
`;

const Tabs = styled.div`
  flex: none;
  height: 32px;
  display: flex;
  align-items: flex-start;
`;

const TabFill = styled.span`
  flex: 1;
  border-top: 1px solid #b9bbbd;
`;

const Tab = styled.button`
  height: ${(p) => (p.$on ? 32 : 30)}px;
  padding: 0 11px;
  border: 1px solid #b4b6b8;
  border-radius: 0 0 3px 3px;
  background: linear-gradient(#d7d8da, #dedfe1);
  white-space: nowrap;
  ${(p) => p.$on && css`
    border-top-color: transparent;
    background: linear-gradient(#eff0f1, #fafbfd);
  `}
`;

const Canvas = styled.div`
  margin-top: 1px;
  min-height: 0;
  background: #fff;
  border: 1px solid #b9bbbd;
  svg { width: 100%; height: 100%; }
`;

/* ---------- form controls ---------- */

const raised = css`
  border: 1px solid #b0b2b4;
  border-radius: 3px;
  background: linear-gradient(#fcfcfc, #ededee);
`;

const ComboFrame = styled.div`
  ${raised}
  flex: ${(p) => (p.$fill ? "1 1 0" : "none")};
  min-width: 0;
  height: 30px;
  display: grid;
  align-items: center;
  > * { grid-area: 1 / 1; }
  > svg { pointer-events: none; margin-left: 7px; }
  > svg:last-child { justify-self: end; margin-right: 7px; }
`;

const ComboSelect = styled.select`
  appearance: none;
  width: 100%;
  height: 28px;
  padding-left: ${(p) => (p.$icon ? 24 : 4)}px;
  border: 0;
  background: none;
`;

const Combo = ({ label, value, icon, fill }) => (
  <ComboFrame $fill={fill}>
    <ComboSelect aria-label={label} $icon={icon}><option>{value}</option></ComboSelect>
    {icon && <Icon name={icon} size={15} />}
    <Arrow />
  </ComboFrame>
);

const Field = styled.div`
  flex: ${(p) => (p.$w ? "none" : "1 1 0")};
  width: ${(p) => (p.$w ? `${p.$w}px` : "auto")};
  min-width: 0;
  height: ${(p) => p.$h || 30}px;
  display: flex;
  align-items: center;
  overflow: hidden;
  background: #fcfcfc;
  border: 1px solid #b0b2b4;
  border-radius: 3px;
  > svg { margin-left: ${(p) => (p.$search || 0)}px; }
`;

const TextInput = styled.input`
  flex: 1;
  min-width: 0;
  height: 100%;
  padding: 0 4px;
  border: 0;
  outline: 0;
  background: none;
  font-size: ${(p) => (p.$small ? 12 : 15)}px;
  text-align: ${(p) => (p.$center ? "center" : "left")};
  &::placeholder { color: #8f9193; opacity: 1; }
`;

const Steps = styled.span`
  width: 14px;
  height: 100%;
  display: flex;
  flex-direction: column;
  border-left: 1px solid #c0c2c4;
  background: linear-gradient(#fcfcfc, #f0f1f2);
  button { flex: 1; }
`;

const Spin = ({ id, value, w, h, small, atMax }) => (
  <Field $w={w} $h={h}>
    <TextInput id={id} defaultValue={value} $small={small} />
    <Steps>
      <PlainButton aria-label="Aumentar"><Arrow up faded={atMax} /></PlainButton>
      <PlainButton aria-label="Disminuir"><Arrow /></PlainButton>
    </Steps>
  </Field>
);

const PushButton = styled.button`
  ${raised}
  flex: none;
  width: ${(p) => (p.$w ? `${p.$w}px` : "auto")};
  height: ${(p) => p.$h || 30}px;
  display: flex;
  align-items: center;
  justify-content: center;
  gap: ${(p) => p.$gap || 0}px;
  white-space: nowrap;
  ${(p) => p.$on && css`
    border-color: #aaacae;
    background: #d9dadb;
  `}
  ${(p) => p.disabled && css`
    svg { opacity: 0.45; }
  `}
`;

/* ---------- layer styling panel ---------- */

const StyleBody = styled.div`
  flex: 1;
  min-height: 0;
  padding: 0 3px 4px;
  display: flex;
  flex-direction: column;
  gap: 6px;
`;

const StyleSplit = styled.div`
  flex: 1;
  min-height: 0;
  display: flex;
  gap: 3px;
`;

const SideTabs = styled.div`
  flex: none;
  width: 38px;
  display: flex;
  flex-direction: column;
  background: #5c5c5c;
`;

const SideTab = styled(PlainButton)`
  height: 32px;
  padding-right: 8px;
  ${(p) => p.$on && css`
    padding-right: 2px;
    background: #eff0f1;
  `}
`;

const StylePage = styled.div`
  flex: 1;
  min-width: 0;
  min-height: 0;
  display: flex;
  flex-direction: column;
`;

const SymbolRow = styled.div`
  flex: none;
  height: 155px;
  margin: 6px 0 5px;
  display: flex;
  gap: 6px;
`;

const Preview = styled.div`
  flex: 1;
  display: grid;
  place-items: center;
`;

const SymbolTree = styled.ul`
  width: 256px;
  margin: 0;
  padding: 0;
  list-style: none;
  background: #fcfcfc;
  border: 1px solid #b9bbbd;
`;

const SymbolNode = styled.li`
  height: 24px;
  padding-left: ${(p) => (p.$child ? 46 : 6)}px;
  display: flex;
  align-items: center;
  gap: ${(p) => (p.$child ? 9 : 11)}px;
  font-weight: ${(p) => (p.$child ? 400 : 700)};
  background: ${(p) => (p.$child ? "none" : "#c2e0f5")};
`;

const SymbolButtons = styled.div`
  padding-top: 6px;
  display: grid;
  grid-template-columns: 28px 28px;
  grid-auto-rows: 24px;
  gap: 10px 6px;
`;

const Rule = styled.hr`
  flex: none;
  width: 100%;
  height: 2px;
  margin: 0;
  border: 0;
  border-top: 1px solid #8c8f92;
  background: #fff;
`;

const Scroller = styled.div`
  flex: 1;
  min-height: 0;
  padding: 7px 9px 0 0;
  display: flex;
  flex-direction: column;
`;

const Params = styled.div`
  flex: none;
  display: flex;
  flex-direction: column;
  gap: 7px;
  margin-bottom: 5px;
`;

const Param = styled.div`
  display: flex;
  align-items: center;
  > label { flex: none; width: 74px; }
`;

const Controls = styled.div`
  flex: 1;
  min-width: 0;
  display: flex;
  align-items: center;
  gap: ${(p) => p.$gap || 0}px;
`;

const ColorSwatch = styled.span`
  flex: 1;
  height: 16px;
  margin: 0 4px;
  border-radius: 2px;
  background: #987db7;
`;

const ColorButton = styled(PushButton)`
  flex: 1;
`;

const Slider = styled.input.attrs({ type: "range" })`
  appearance: none;
  flex: 1;
  min-width: 0;
  height: 14px;
  background: none;
  &::-webkit-slider-runnable-track {
    height: 5px;
    border: 1px solid #2b80b5;
    border-radius: 2px;
    background: #5fbef2;
  }
  &::-webkit-slider-thumb {
    appearance: none;
    width: 13px;
    height: 13px;
    margin-top: -5px;
    border: 1px solid #9fa1a3;
    border-radius: 3px;
    background: #fcfcfc;
  }
`;

const OverrideButton = styled(PlainButton)`
  flex: none;
  width: 24px;
  height: 24px;
  margin: 0 4px 0 8px;
`;

const SearchRow = styled.div`
  flex: none;
  margin: 5px 0 4px;
  display: flex;
  align-items: center;
`;

const ClearButton = styled(PlainButton)`
  width: 32px;
  height: 100%;
`;

const DropEnd = styled(PlainButton)`
  width: 20px;
  height: 100%;
  border-left: 1px solid #c0c2c4;
  background: linear-gradient(#fcfcfc, #f0f1f2);
`;

const LibraryButton = styled(PlainButton)`
  width: 30px;
  padding-left: 4px;
`;

const Gallery = styled.div`
  flex: 1;
  min-height: 0;
  display: flex;
  overflow: hidden;
  background: #fcfcfc;
  border: 1px solid #b9bbbd;
`;

const GalleryGrid = styled.ul`
  flex: 1;
  margin: 0;
  padding: 17px 0 0 2px;
  list-style: none;
  display: grid;
  grid-template-columns: repeat(4, 101px);
  grid-auto-rows: 106px;
`;

const GalleryItem = styled.li`
  display: flex;
  flex-direction: column;
  align-items: center;
  gap: 13px;
  font-size: 12px;
  line-height: 16px;
  text-align: center;
  white-space: pre-wrap;
  span { max-width: 88px; }
`;

const ScrollBar = styled.div`
  width: 14px;
  display: flex;
  flex-direction: column;
  border-left: 1px solid #b9bbbd;
  background: #e5e6e6;
`;

const ScrollEnd = styled(PlainButton)`
  height: 14px;
  background: #fcfcfc;
`;

const ScrollThumb = styled.span`
  flex: 119;
  background: #fcfcfc;
  border: solid #b9bbbd;
  border-width: 1px 0;
`;

const ScrollTrough = styled.span`
  flex: 74;
  border-bottom: 1px solid #b9bbbd;
`;

const SaveRow = styled.div`
  flex: none;
  margin-top: 7px;
  display: flex;
  align-items: center;
  gap: 6px;
`;

const Spacer = styled.span`
  flex: 1;
`;

const GroupTitle = styled.button`
  flex: none;
  height: 24px;
  margin: 22px 0 3px;
  padding-left: 3px;
  display: flex;
  align-items: center;
  gap: 6px;
  border: 0;
  background: none;
  font-weight: 700;
`;

const ApplyRow = styled.div`
  flex: none;
  display: flex;
  align-items: center;
  gap: 6px;
`;

const LiveUpdate = styled.label`
  display: flex;
  align-items: center;
  gap: 5px;
  margin-right: 7px;
`;

/* ---------- status bar ---------- */

const StatusBar = styled.footer`
  flex: none;
  height: 36px;
  padding: 0 6px 0 4px;
  display: flex;
  align-items: center;
  font-size: 12px;
  justify-content: space-between;
`;

const StatusSide = styled.div`
  display: flex;
  align-items: center;
  gap: ${(p) => p.$gap}px;
`;

const StatusItem = styled.div`
  display: flex;
  align-items: center;
  gap: ${(p) => p.$gap || 4}px;
`;

const StatusLink = styled.button`
  display: flex;
  align-items: center;
  gap: 3px;
  margin: 0 14px 0 6px;
  border: 0;
  background: none;
  font-size: 12px;
`;

/* ---------- map ---------- */

// Digitised in two sheets, each with its own origin and scale.
const north = (pts) => pts.map(([x, y]) => [580 + x / 2.8, 180 + y / 3]);
const south = (pts) => pts.map(([x, y]) => [580 + x / 3, 540 + y / 3]);

const OUTLINE = [
  ...north([
    [400, 1060], [302, 964], [445, 49], [1417, 49], [1415, 62], [1419, 73], [1395, 100], [1385, 101], [1372, 98], [1356, 97], [1350, 106], [1349, 120], [1341, 130], [1339, 150], [1342, 170], [1350, 180], [1349, 195], [1348, 210], [1356, 220], [1361, 231], [1353, 245], [1345, 260], [1342, 280], [1350, 294], [1345, 308], [1336, 328], [1323, 342], [1322, 375], [1317, 388], [1307, 405], [1306, 413], [1310, 430], [1304, 440], [1284, 455], [1258, 461], [1252, 474], [1241, 488], [1238, 499], [1220, 502], [1201, 512], [1200, 543], [1192, 552], [1172, 561], [1169, 568], [1177, 587], [1174, 630], [1170, 632], [1167, 700], [1150, 726], [1168, 745], [1175, 780], [1183, 791], [1167, 825], [1160, 850], [1160, 872], [1154, 880], [1132, 886], [1134, 896], [1148, 908], [1142, 915], [1141, 930], [1134, 948], [1154, 967], [1156, 1005], [1145, 1022], [1144, 1028], [1160, 1049], [1154, 1056], [1137, 1070], [1135, 1085], [1124, 1110], [1098, 1131], [1086, 1155], [1072, 1180], [1060, 1193],
  ]),
  ...south([
    [1120, 118], [1115, 130], [1112, 150], [1104, 168], [1068, 183], [1075, 203], [1057, 225], [1054, 238], [1030, 247], [1020, 270], [985, 272], [981, 280], [987, 292], [982, 303], [960, 313], [935, 331], [895, 334], [880, 341], [870, 350], [871, 363], [860, 373], [866, 400], [864, 412], [841, 433], [855, 448], [866, 468], [850, 492], [851, 515], [859, 525], [857, 562], [842, 566], [844, 600], [838, 615], [822, 631], [832, 650], [831, 675], [842, 700], [848, 730], [865, 750], [860, 762], [870, 775], [885, 810], [905, 833], [925, 860], [960, 880], [998, 879], [1000, 890], [996, 897], [1013, 911], [1002, 922], [988, 942], [984, 963], [955, 988], [953, 1018], [940, 1026], [937, 1044], [910, 1050], [880, 1043], [858, 1027], [825, 1027], [805, 1013], [785, 1013], [770, 1027], [766, 1048], [475, 1321], [47, 1321], [395, 860], [410, 853], [447, 815], [454, 778], [448, 766], [452, 745], [445, 727], [434, 718], [424, 700], [392, 696], [391, 684], [411, 667], [400, 658], [408, 650], [397, 645], [402, 638], [401, 615], [375, 580], [360, 545], [355, 538], [320, 516], [299, 488], [307, 440], [302, 415], [289, 400], [290, 350], [283, 333], [325, 300],
  ]),
];

const HOSPITALS = [
  ...north([
    [624, 57], [1288, 105], [1223, 138], [1288, 177], [1257, 228], [1167, 234], [473, 279], [1080, 372], [1153, 471], [1150, 477], [1176, 504], [426, 504], [422, 504], [1120, 603], [904, 633], [946, 672], [937, 744], [1092, 753], [364, 741], [909, 870], [610, 900], [853, 915], [929, 915], [375, 918], [358, 984], [775, 987], [719, 1014], [1062, 993], [1055, 1002], [495, 1135], [498, 1134],
  ]),
  ...south([
    [780, 120], [894, 117], [1074, 111], [831, 144], [828, 171], [555, 165], [567, 167], [564, 159], [558, 168], [435, 198], [642, 237], [762, 237], [837, 255], [708, 279], [711, 279], [600, 285], [687, 300], [831, 282], [843, 291], [840, 291], [850, 312], [840, 315], [822, 324], [897, 297], [531, 333], [432, 360], [330, 378], [621, 357], [423, 405], [531, 390], [348, 447], [450, 462], [519, 462], [654, 450], [657, 456], [378, 495], [480, 513], [405, 540], [588, 554], [588, 552], [606, 582], [633, 612], [780, 615], [678, 656], [678, 659], [705, 687], [456, 651], [516, 732], [588, 747], [591, 741], [681, 756], [537, 798], [837, 718], [834, 712], [834, 705], [840, 735], [852, 774], [848, 788], [840, 798], [822, 810], [872, 795], [867, 787], [870, 799], [867, 795], [682, 825], [678, 827], [672, 828], [636, 864], [813, 852], [810, 861], [924, 870], [918, 870], [800, 900], [798, 900], [606, 903], [576, 939], [558, 981], [356, 930], [357, 932], [426, 960], [477, 951], [381, 1011], [696, 1011], [624, 1032], [573, 1053], [624, 1074], [615, 1107], [459, 1080], [390, 1089], [336, 1134], [486, 1137], [483, 1140], [279, 1182], [402, 1185], [513, 1182], [360, 1248], [360, 1299], [324, 1317], [543, 1251],
  ]),
];

const ProvinceMap = () => (
  <svg viewBox="359 176 1028 823" preserveAspectRatio="xMidYMid meet" role="img" aria-label="Provincia de Santa Fe">
    <polygon points={OUTLINE.map((p) => p.join(",")).join(" ")} fill="#e77148" stroke="#232323" strokeWidth="1" strokeLinejoin="round" />
    <g fill="#987db7" stroke="#232323" strokeWidth="1.100">
      {HOSPITALS.map(([x, y], i) => <circle key={i} cx={x} cy={y} r="3.700" />)}
    </g>
    <path d="M688 414c-2-3-5-5-5.500-8 1-1.500 3 0 4.500 2l1.500-1.500-1.500-10c.5-1.500 2-1.500 2.500 0l1.500 6.500.3-8c.5-1.500 2-1.500 2.400 0l.5 8 1.300-7.500c.7-1.200 2.100-1 2.200.4l-.4 8 1.900-5c.8-1 2-.5 1.900.8l-1.800 8.500-.8 6z" fill="#4d4d4d" stroke="#fff" strokeWidth="1" paintOrder="stroke" />
  </svg>
);

/* ---------- data ---------- */

const MENUS = [
  ["Pro", "y", "ecto"], ["", "E", "dición"], ["", "V", "er"], ["", "C", "apa"], ["Con", "f", "iguración"], ["Co", "m", "plementos"], ["Vect", "o", "rial"],
  ["", "R", "áster"], ["Base de ", "d", "atos"], ["", "W", "eb"], ["", "M", "alla"], ["Pro", "c", "esos"], ["A", "y", "uda"],
];

// "!" marks a disabled tool, "+" a drop-down, "*" a pressed tool, "|" a separator.
const BARS = [
  [
    ["file", "open", "save", "layout", "layouts", "style"],
    ["hand*", "panSel", "zoomIn", "zoomOut", "zoomFull", "zoomSel!", "zoomLayer", "zoomNative!", "zoomLast", "zoomNext!", "newMap", "new3d", "bookmarkNew", "bookmarks", "clock", "refresh"],
    ["identify", "table", "abacus", "gear", "sigma", "measure+", "tip", "actions!+", "textNote+"],
    ["select+", "selectExpr+", "deselect+", "selectLoc"],
  ],
  [
    ["sources", "geopackage", "shapefile", "spatialite", "memory", "|", "virtual", "|"],
    ["pencils!", "pencil", "saveEdits!", "addPoint!", "vertex!+", "multiEdit!", "trash!", "cut!", "copy!", "paste!", "undoGray!", "redoGray!"],
    ["label", "diagram", "|", "pinLabel", "unplaced", "|", "lab1!", "lab2!", "lab3!", "lab4!", "lab5!"],
    ["search"],
    ["python", "earth"],
    ["help"],
    [],
  ],
  [["plugin1", "plugin2"], [], ["plot"]],
];

const LAYER_TOOLS = ["brush*", "addGroup", "eye", "filter", "expr+", "expand", "collapse", "remove"];

const ToolItem = ({ spec, small }) => {
  if (spec === "|") return <Separator />;
  const name = spec.replace(/[!+*]/g, "");
  const menu = spec.includes("+");
  return (
    <Tool aria-label={name} $small={small} $menu={menu} $on={spec.includes("*")} disabled={spec.includes("!")}>
      <Icon name={name} size={small ? 16 : 24} />
      {menu && <Arrow />}
    </Tool>
  );
};

const Dot = ({ r, fill, line }) => <circle cx="22" cy="22" r={r} fill={fill} stroke={line} strokeWidth="1.300" />;

const star = Array.from({ length: 20 }, (_, i) => {
  const r = i % 2 ? 7 : 13;
  const a = (i * Math.PI) / 10 + Math.PI / 2;
  return `${22 + r * Math.cos(a)},${22 + r * Math.sin(a)}`;
}).join(" ");

const SYMBOLS = [
  ["dot  black", <Dot r={6.500} fill="#000" line="#000" />],
  ["dot  white", <Dot r={7.500} fill="#fff" line="#000" />],
  ["dot blue", <Dot r={7.500} fill="#487bb6" line="#32567f" />],
  ["dot green", <Dot r={7.500} fill="#54b04a" line="#3d8035" />],
  ["dot red", <Dot r={7.500} fill="#db1e2a" line="#801119" />],
  ["effect drop shadow", (
    <g>
      <defs><filter id="soft" x="-50%" y="-50%" width="200%" height="200%"><feGaussianBlur stdDeviation="3.200" /></filter></defs>
      <circle cx="27" cy="27" r="9.500" fill="#000" opacity=".75" filter="url(#soft)" />
      <polygon points={star} fill="#f00" />
    </g>
  )],
  ["shield disability", (
    <g>
      <rect x="11.500" y="11.500" width="21" height="21" rx="1" fill="#487bb6" />
      <g fill="none" stroke="#fff" strokeLinejoin="round">
        <circle cx="25" cy="14.500" r="1.600" fill="#fff" stroke="none" />
        <path d="m17.500 17.500 3-2.500 4 2-2.500 4.500 5.500-.3-.8 5.800" strokeWidth="2" />
        <path d="M19 21.500a4.600 4.600 0 1 0 5.500 5.500" strokeWidth="1.800" />
      </g>
    </g>
  )],
  ["topo hospital", <g><circle cx="22" cy="22" r="10" fill="#fff" stroke="#db1e2a" strokeWidth="1.500" /><path d="M22 16v12M16 22h12" stroke="#db1e2a" strokeWidth="3" /></g>],
];

const Marker = ({ fill = "#987db7", line = "#444", size = 10 }) => (
  <svg width={size} height={size} viewBox="0 0 10 10" aria-hidden="true"><circle cx="5" cy="5" r="4" fill={fill} stroke={line} /></svg>
);

const DockHeader = ({ title }) => (
  <DockTitle>
    <h2>{title}</h2>
    <PlainButton aria-label="Desacoplar"><Icon name="float" size={11} /></PlainButton>
    <PlainButton aria-label="Cerrar"><Icon name="close" size={11} /></PlainButton>
  </DockTitle>
);

const Override = () => <OverrideButton aria-label="Definido por datos"><Icon name="define" size={22} /></OverrideButton>;

const LayersDock = () => (
  <Dock>
    <DockHeader title="Capas" />
    <LayerTools>{LAYER_TOOLS.map((t) => <ToolItem key={t} spec={t} small />)}</LayerTools>
    <LayerList>
      <LayerRow $selected>
        <CheckBox id="l1" defaultChecked />
        <LayerSymbol><Marker fill="#6f8cc8" line="#4a6aa0" size={8} /></LayerSymbol>
        <LayerLabel htmlFor="l1" $active>santafe_hospital</LayerLabel>
      </LayerRow>
      <LayerRow>
        <CheckBox id="l2" defaultChecked />
        <LayerSymbol><svg width="16" height="16"><rect x=".5" y=".5" width="15" height="15" fill="#e77148" stroke="#9c4a2e" /></svg></LayerSymbol>
        <LayerLabel htmlFor="l2">limite_provincial_santafe</LayerLabel>
      </LayerRow>
    </LayerList>
    <Tabs><Tab>Navegador</Tab><Tab $on>Capas</Tab><TabFill /></Tabs>
  </Dock>
);

const SymbolEditor = () => (
  <SymbolRow>
    <Preview>
      <svg width="100" height="100" viewBox="0 0 100 100" aria-hidden="true">
        <path d="M49.500 0v100M0 50.500h100" stroke="#8c8e90" /><circle cx="50" cy="51" r="3.800" fill="#987db7" stroke="#333" />
      </svg>
    </Preview>
    <SymbolTree>
      <SymbolNode><Arrow /><Marker fill="#7189c4" line="#4a5a80" />Marcador</SymbolNode>
      <SymbolNode $child><Marker />Simple Marker</SymbolNode>
    </SymbolTree>
    <SymbolButtons>
      <PushButton $h={24} aria-label="Añadir"><Icon name="plus" size={14} /></PushButton>
      <PushButton $h={24} aria-label="Subir" disabled><Icon name="up" size={14} /></PushButton>
      <PushButton $h={24} aria-label="Quitar" disabled><Icon name="minus" size={14} /></PushButton>
      <PushButton $h={24} aria-label="Bajar" disabled><Icon name="down" size={14} /></PushButton>
      <PushButton $h={24} aria-label="Duplicar" disabled><Icon name="dup" size={14} /></PushButton>
      <PushButton $h={24} aria-label="Bloquear" disabled><Icon name="unlock" size={14} /></PushButton>
    </SymbolButtons>
  </SymbolRow>
);

const SymbolParams = () => (
  <Params>
    <Param>
      <label htmlFor="color">Color</label>
      <Controls $gap={1}>
        <ColorButton id="color" $h={28}><ColorSwatch /></ColorButton>
        <PushButton $w={12} $h={28} aria-label="Opciones de color"><Arrow /></PushButton>
      </Controls>
    </Param>
    <Param>
      <label htmlFor="opacity">Opacidad</label>
      <Controls $gap={4}>
        <Slider id="opacity" defaultValue="100" />
        <Spin id="opacityValue" value="100,0 %" w={100} h={28} atMax />
      </Controls>
      <Override />
    </Param>
    <Param>
      <label htmlFor="size">Tamaño</label>
      <Controls $gap={6}>
        <Spin id="size" value="2,00000" />
        <Combo label="Unidad" value="Milímetros" fill />
      </Controls>
      <Override />
    </Param>
    <Param>
      <label htmlFor="rotation">Rotación</label>
      <Controls><Spin id="rotation" value="0,00 º" /></Controls>
      <Override />
    </Param>
  </Params>
);

const StyleDock = () => (
  <Dock>
    <DockHeader title="Estilo de capas" />
    <StyleBody>
      <Combo label="Capa" value="santafe_hospital" icon="points" />
      <StyleSplit>
        <SideTabs>
          <SideTab $on aria-label="Simbología"><Icon name="brushPale" /></SideTab>
          {["tabLabel", "tabMask", "cube", "tree", "history"].map((n) => (
            <SideTab key={n} aria-label={n}><Icon name={n} size={22} /></SideTab>
          ))}
        </SideTabs>
        <StylePage>
          <Combo label="Representador" value="Símbolo Único" icon="single" />
          <SymbolEditor />
          <Rule />
          <Scroller>
            <SymbolParams />
            <Rule />
            <SearchRow>
              <Field $search={10}>
                <Icon name="find" size={14} />
                <TextInput aria-label="Buscar símbolos" defaultValue="Favoritos" />
                <ClearButton aria-label="Borrar"><Icon name="clear" size={14} /></ClearButton>
                <DropEnd aria-label="Mostrar lista"><Arrow /></DropEnd>
              </Field>
              <LibraryButton aria-label="Administrador de estilos"><Icon name="style" size={16} /></LibraryButton>
            </SearchRow>
            <Gallery>
              <GalleryGrid>
                {SYMBOLS.map(([name, art]) => (
                  <GalleryItem key={name}>
                    <svg width="60" height="60" viewBox="-8 -8 60 60" aria-hidden="true">{art}</svg>
                    <span>{name}</span>
                  </GalleryItem>
                ))}
              </GalleryGrid>
              <ScrollBar>
                <ScrollEnd aria-label="Arriba"><Arrow up /></ScrollEnd>
                <ScrollThumb />
                <ScrollTrough />
                <ScrollEnd aria-label="Abajo"><Arrow /></ScrollEnd>
              </ScrollBar>
            </Gallery>
            <SaveRow>
              <PushButton $w={24} $h={24} $on aria-label="Iconos"><Icon name="grid" size={16} /></PushButton>
              <PlainButton aria-label="Lista"><Icon name="table" size={14} /></PlainButton>
              <Spacer />
              <PushButton $w={127}>Guardar símbolo</PushButton>
              <PushButton $w={89} $gap={6}>Avanzado<svg width="6" height="4" aria-hidden="true"><path d="M0 0h6L3 4z" fill="#7f8183" /></svg></PushButton>
            </SaveRow>
            <GroupTitle><Icon name="triRight" size={13} />Representación de capas</GroupTitle>
          </Scroller>
          <ApplyRow>
            <PushButton $w={24} $h={24} aria-label="Deshacer"><Icon name="undo" size={15} /></PushButton>
            <PushButton $w={24} $h={24} aria-label="Rehacer"><Icon name="redo" size={15} /></PushButton>
            <Spacer />
            <LiveUpdate><CheckBox defaultChecked />Actualización en vivo</LiveUpdate>
            <PushButton $w={80}><Icon name="check" size={17} /><span><Mnemonic>A</Mnemonic>plicar</span></PushButton>
          </ApplyRow>
        </StylePage>
      </StyleSplit>
    </StyleBody>
    <Tabs><Tab $on>Estilo de capas</Tab><Tab>Caja de herramientas de Procesos</Tab><TabFill /></Tabs>
  </Dock>
);

export default function App() {
  return (
    <Window>
      <Global />
      <TitleBar>
        <Icon name="logo" size={20} />
        <WindowTitle>*modulo4 — QGIS</WindowTitle>
        <WindowButtons>
          <PlainButton aria-label="Minimizar"><Icon name="minWin" size={18} /></PlainButton>
          <PlainButton aria-label="Maximizar"><Icon name="maxWin" size={18} /></PlainButton>
          <PlainButton aria-label="Cerrar"><Icon name="closeWin" size={18} /></PlainButton>
        </WindowButtons>
      </TitleBar>
      <MenuBar>
        {MENUS.map(([a, key, b]) => <MenuItem key={a + key + b}>{a}<Mnemonic>{key}</Mnemonic>{b}</MenuItem>)}
      </MenuBar>
      {BARS.map((row, r) => (
        <ToolBarRow key={r} $last={r === BARS.length - 1}>
          {row.map((bar, b) => (
            <ToolBar key={b}>
              <Grip />
              {bar.map((t, i) => <ToolItem key={i} spec={t} />)}
            </ToolBar>
          ))}
        </ToolBarRow>
      ))}
      <Workspace>
        <LayersDock />
        <Splitter><SplitDots /></Splitter>
        <Canvas><ProvinceMap /></Canvas>
        <Splitter><SplitDots /></Splitter>
        <StyleDock />
      </Workspace>
      <StatusBar>
        <Field $w={357} $search={8}>
          <Icon name="find" size={14} />
          <TextInput aria-label="Localizar" placeholder="Escriba para localizar (Ctrl+K)" />
        </Field>
        <StatusSide $gap={12}>
          <StatusItem>
            <label htmlFor="coord">Coordenada</label>
            <Field $w={102} $h={25}><TextInput id="coord" defaultValue="-61.907,-30.642" $small $center /></Field>
            <PlainButton aria-label="Extensión"><Icon name="mouse" size={16} /></PlainButton>
          </StatusItem>
          <StatusSide $gap={8}>
            <StatusItem>
              <label htmlFor="scale">Escala</label>
              <Field $w={103}><TextInput id="scale" defaultValue="1:2230677" $small /><DropEnd aria-label="Escalas"><Arrow /></DropEnd></Field>
            </StatusItem>
            <StatusItem $gap={8}>
              <PlainButton aria-label="Bloquear escala"><Icon name="lock" size={16} /></PlainButton>
              <StatusItem>
                <label htmlFor="magnifier">Amplificador</label>
                <Spin id="magnifier" value="100%" w={98} small />
              </StatusItem>
            </StatusItem>
            <StatusItem $gap={10}>
              <label htmlFor="maprot">Rotación</label>
              <Spin id="maprot" value="0,0 °" w={94} h={28} small />
            </StatusItem>
            <StatusItem $gap={5}>
              <CheckBox id="render" defaultChecked />
              <label htmlFor="render">Representar</label>
            </StatusItem>
            <StatusLink><Icon name="crs" size={16} />EPSG:4326</StatusLink>
            <PlainButton aria-label="Mensajes"><Icon name="bubble" size={17} /></PlainButton>
          </StatusSide>
        </StatusSide>
      </StatusBar>
    </Window>
  );
}
